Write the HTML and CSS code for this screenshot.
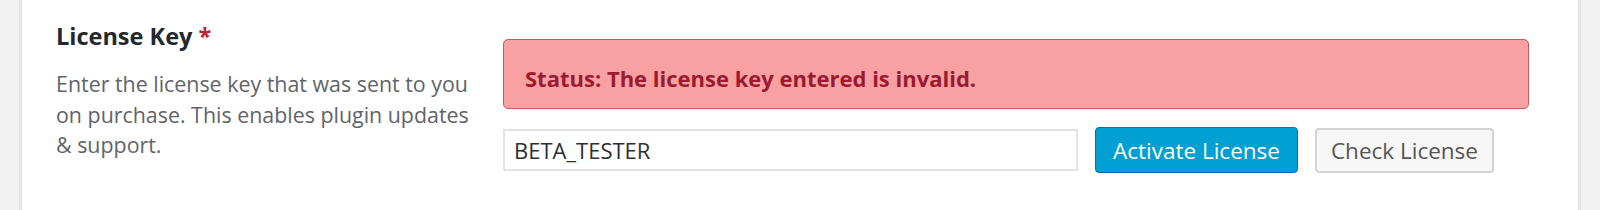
FILE: index.html
```html
<!DOCTYPE html>
<html lang="en">
<head>
  <meta charset="UTF-8">
  <title>License Key</title>
  <link rel="stylesheet" href="styles.css">
</head>
<body>
  <div class="page">
    <div class="panel">
      <div class="field-info">
        <h3 class="field-label">License Key <span class="required">*</span></h3>
        <p class="field-desc">Enter the license key that was sent to you on purchase. This enables plugin updates &amp; support.</p>
      </div>
      <div class="field-body">
        <div class="notice-error">
          <p>Status: The license key entered is invalid.</p>
        </div>
        <div class="license-row">
          <input class="license-input" type="text" value="BETA_TESTER">
          <button class="btn btn-primary">Activate License</button>
          <button class="btn btn-secondary">Check License</button>
        </div>
      </div>
    </div>
  </div>
</body>
</html>
```

FILE: styles.css
```css
body {
  margin: 0;
  padding: 0;
  background-color: #f1f1f1;
  font-family: "Open Sans", "Noto Sans", Arial, sans-serif;
}

.page {
  padding: 0 19px;
  height: 210px;
}

.panel {
  display: flex;
  height: 100%;
  background: #fff;
  border-left: 3px solid #e2e4e7;
  border-right: 3px solid #e2e4e7;
  box-sizing: border-box;
}

.field-info {
  width: 425px;
  padding: 20px 0 0 34px;
  flex-shrink: 0;
}

.field-label {
  margin: 0;
  font-size: 23.5px;
  line-height: 32px;
  font-weight: 700;
  color: #23282d;
}

.required {
  color: #c5202f;
}

.field-desc {
  margin: 17px 0 0;
  font-size: 21.4px;
  line-height: 30.5px;
  color: #5f6468;
}

.field-body {
  padding: 39px 0 0 22px;
}

.notice-error {
  width: 1026px;
  height: 70px;
  box-sizing: border-box;
  padding: 23px 21px 0;
  background: #f9a0a3;
  border: 1px solid #c95a60;
  border-radius: 5px;
}

.notice-error p {
  margin: 0;
  font-size: 22px;
  line-height: 30px;
  font-weight: 700;
  color: #9a1b2f;
}

.license-row {
  display: flex;
  align-items: center;
  gap: 17px;
  margin-top: 18px;
}

.license-input {
  width: 575px;
  height: 42px;
  box-sizing: border-box;
  padding: 0 9px;
  border: 2px solid #e2e3e5;
  font-family: "Open Sans", "Noto Sans", Arial, sans-serif;
  font-size: 22px;
  color: #2b2e32;
  outline: none;
}

.btn {
  height: 46px;
  box-sizing: border-box;
  padding: 0 17px;
  border-radius: 4px;
  font-family: "Open Sans", "Noto Sans", Arial, sans-serif;
  font-size: 22.5px;
  white-space: nowrap;
  cursor: pointer;
}

.btn-primary {
  background: #00a0d2;
  border: 1px solid #0073aa;
  color: #fff;
}

.btn-secondary {
  height: 45px;
  padding: 0 14px;
  background: #f7f7f7;
  border: 2px solid #d4d4d4;
  color: #555;
}
```
